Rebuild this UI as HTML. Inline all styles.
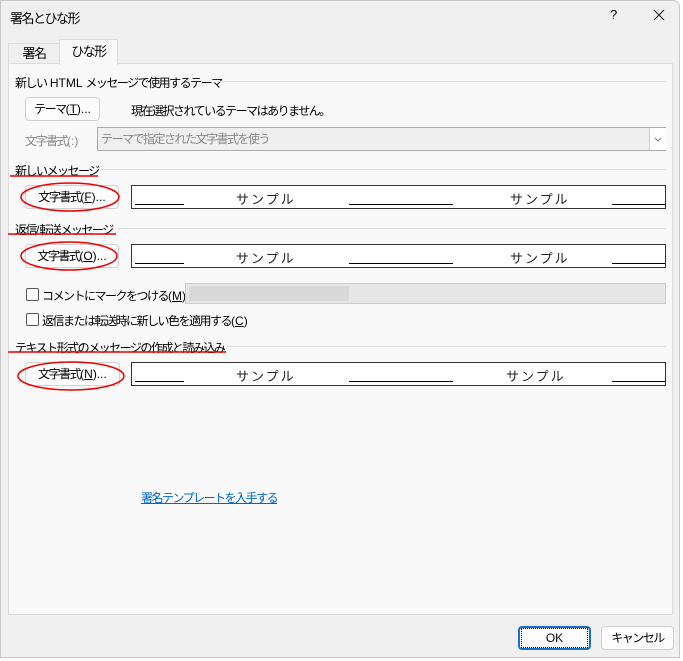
<!DOCTYPE html>
<html><head><meta charset="utf-8"><style>
body{margin:0;width:683px;height:661px;background:#fff;font-family:"Liberation Sans","Noto Sans CJK JP",sans-serif;font-size:12px;color:#000;position:relative;overflow:hidden;letter-spacing:-1.5px}
.l{letter-spacing:0}
.a{position:absolute;white-space:nowrap}
.win{position:absolute;left:0;top:0;width:680px;height:658px;background:#f0f0f0;border:1px solid #c8c8c8;border-radius:0 7px 0 0;box-sizing:border-box}
.panel{position:absolute;left:8px;top:63px;width:665px;height:552px;background:#f9f9f9;border:1px solid #dcdcdc;box-sizing:border-box}
.btn{position:absolute;background:#fdfdfd;border:1px solid #d0d0d0;border-radius:4px;box-sizing:border-box;text-align:center;line-height:22px}
.hr{position:absolute;height:1px;background:#dcdcdc}
.samp{position:absolute;left:131px;width:535px;height:24px;border:1px solid #333;background:#fff;box-sizing:border-box}
.ln{position:absolute;bottom:3px;height:1px;background:#000}
.sm{position:absolute;top:3px;font-size:13px;letter-spacing:2px;color:#222}
.cb{position:absolute;width:11px;height:11px;border:1px solid #555;border-radius:2px;background:#fff}
</style></head><body>
<div class="win"></div>
<div class="a" style="left:10px;top:8px;font-size:13px">署名とひな形</div>
<div class="a" style="left:610px;top:7px;font-size:13px">?</div>
<svg class="a" style="left:653px;top:9px" width="12" height="12"><path d="M1 1L11 11M11 1L1 11" stroke="#222" stroke-width="1.1"/></svg>
<div class="a" style="left:8px;top:43px;width:50px;height:20px;border:1px solid #dcdcdc;border-bottom:none;background:#f0f0f0;text-align:center;line-height:20px;font-size:13px">署名</div>
<div class="a" style="left:59px;top:39px;width:57px;height:25px;border:1px solid #dcdcdc;border-bottom:none;background:#f9f9f9;text-align:center;line-height:24px;font-size:13px;z-index:2">ひな形</div>
<div class="panel"></div>
<div class="a" style="left:15px;top:74px">新しい<span class="l"> HTML </span>メッセージで使用するテーマ</div>
<div class="hr" style="left:218px;top:81px;width:448px"></div>
<div class="btn" style="left:25px;top:97px;width:75px;height:24px">テーマ<span class="l">(<u>T</u>)...</span></div>
<div class="a" style="left:131px;top:102px">現在選択されているテーマはありません。</div>
<div class="a" style="left:25px;top:132px;color:#888">文字書式<span class="l">(:)</span></div>
<div class="a" style="left:97px;top:127px;width:569px;height:24px;border:1px solid #aaa;background:#efefef;box-sizing:border-box;color:#888;line-height:22px;padding-left:3px">テーマで指定された文字書式を使う</div>
<div class="a" style="left:649px;top:128px;width:16px;height:22px;background:#fff;border-left:1px solid #ccc"><svg width="16" height="22"><path d="M5 10l3 3 3-3" fill="none" stroke="#777"/></svg></div>

<div class="a" style="left:15px;top:162px">新しいメッセージ</div>
<div class="hr" style="left:100px;top:169px;width:566px"></div>
<div class="btn" style="left:25px;top:185px;width:94px;height:24px">文字書式<span class="l">(<u>F</u>)...</span></div>
<div class="samp" style="top:185px"><div class="ln" style="left:3px;width:49px"></div><div class="sm" style="left:104px">サンプル</div><div class="ln" style="left:217px;width:104px"></div><div class="sm" style="left:378px">サンプル</div><div class="ln" style="left:480px;width:53px"></div></div>

<div class="a" style="left:15px;top:221px">返信<span class="l">/</span>転送メッセージ</div>
<div class="hr" style="left:118px;top:228px;width:548px"></div>
<div class="btn" style="left:25px;top:244px;width:94px;height:24px">文字書式<span class="l">(<u>O</u>)...</span></div>
<div class="samp" style="top:244px"><div class="ln" style="left:3px;width:49px"></div><div class="sm" style="left:104px">サンプル</div><div class="ln" style="left:217px;width:104px"></div><div class="sm" style="left:378px">サンプル</div><div class="ln" style="left:480px;width:53px"></div></div>

<div class="cb" style="left:26px;top:288px"></div>
<div class="a" style="left:42px;top:287px">コメントにマークをつける<span class="l">(<u>M</u>):</span></div>
<div class="a" style="left:185px;top:283px;width:481px;height:21px;border:1px solid #ccc;background:#e6e6e6;box-sizing:border-box"><div style="position:absolute;left:3px;top:2px;width:160px;height:15px;background:#d8d8d8"></div></div>
<div class="cb" style="left:26px;top:313px"></div>
<div class="a" style="left:42px;top:312px">返信または転送時に新しい色を適用する<span class="l">(<u>C</u>)</span></div>

<div class="a" style="left:15px;top:339px">テキスト形式のメッセージの作成と読み込み</div>
<div class="hr" style="left:226px;top:346px;width:440px"></div>
<div class="btn" style="left:25px;top:362px;width:95px;height:24px">文字書式<span class="l">(<u>N</u>)...</span></div>
<div class="samp" style="top:362px"><div class="ln" style="left:3px;width:49px"></div><div class="sm" style="left:104px">サンプル</div><div class="ln" style="left:217px;width:104px"></div><div class="sm" style="left:374px">サンプル</div><div class="ln" style="left:480px;width:53px"></div></div>

<div class="a" style="left:141px;top:489px;color:#0066cc;text-decoration:underline">署名テンプレートを入手する</div>

<div class="btn" style="left:518px;top:626px;width:73px;height:24px;border:2px solid #1a6fc9;line-height:20px;letter-spacing:0"><span style="display:inline-block;border:1px dotted #000;width:65px;line-height:18px">OK</span></div>
<div class="btn" style="left:601px;top:626px;width:73px;height:24px">キャンセル</div>

<svg class="a" style="left:0;top:0" width="683" height="661">
<g fill="none" stroke="#e00" stroke-width="1.5">
<line x1="10" y1="176" x2="98" y2="176"/>
<ellipse cx="70" cy="197" rx="49" ry="14"/>
<line x1="8" y1="234" x2="116" y2="234"/>
<ellipse cx="69" cy="256" rx="48" ry="14"/>
<line x1="8" y1="352" x2="226" y2="352"/>
<ellipse cx="71" cy="376" rx="53" ry="14"/>
</g></svg>
</body></html>
